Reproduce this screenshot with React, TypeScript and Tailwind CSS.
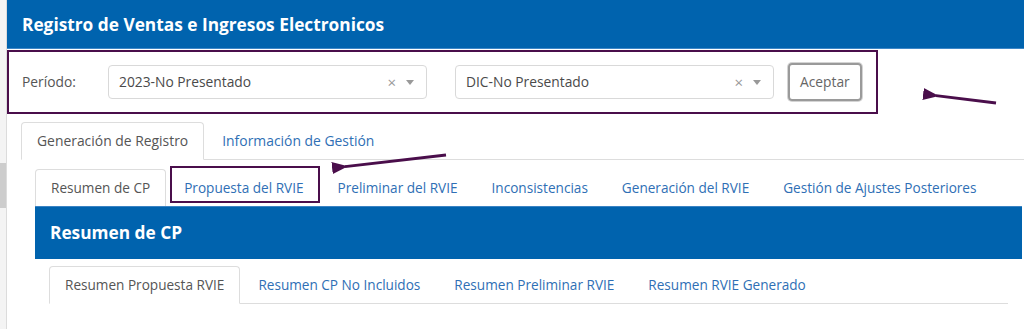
import clsx from 'clsx';

const tabsTop = ['Generación de Registro', 'Información de Gestión'];
const tabsMid = [
  'Resumen de CP',
  'Propuesta del RVIE',
  'Preliminar del RVIE',
  'Inconsistencias',
  'Generación del RVIE',
  'Gestión de Ajustes Posteriores',
];
const tabsLow = ['Resumen Propuesta RVIE', 'Resumen CP No Incluidos', 'Resumen Preliminar RVIE', 'Resumen RVIE Generado'];

function Tab({ label, active, boxed, size = 'text-[13.6px]' }: { label: string; active?: boolean; boxed?: boolean; size?: string }) {
  return (
    <div
      className={clsx(
        'relative mr-[2px] -mb-px flex h-[38px] items-center px-[15px] rounded-t-[4px] border whitespace-nowrap',
        size,
        active ? 'bg-white border-[#ddd] border-b-white text-[#555]' : 'border-transparent text-[#2f6fb5]'
      )}
    >
      {label}
      {boxed && <span className="absolute left-[1px] -right-[1px] -top-[4px] bottom-[3px] border-2 border-[#4a0e4b]" />}
    </div>
  );
}

function Select({ value }: { value: string }) {
  return (
    <div className="flex h-[34px] w-[319px] items-center rounded-[4px] border border-[#d9d9d9] bg-white pl-[10px] pr-[12px] text-[13.8px] text-[#4a4a4a]">
      <span className="flex-1">{value}</span>
      <span className="text-[15px] leading-none text-[#999]">×</span>
      <span className="ml-[10px] h-0 w-0 border-x-[4px] border-t-[5px] border-x-transparent border-t-[#999]" />
    </div>
  );
}

export default function App() {
  return (
    <div className="relative flex h-[329px] w-[1024px] overflow-hidden bg-white font-['Open_Sans',sans-serif]">
      {/* left gutter */}
      <div className="w-[7px] shrink-0 border-r border-[#dcdcdc] bg-[#f4f4f4] pt-[163px]">
        <div className="h-[45px] bg-[#cdcdcd]" />
      </div>

      <div className="flex-1">
        <div className="flex h-[49px] items-center border-b border-[#3d87c8] bg-[#0063ae] pl-[15px] pt-[2px] text-[17.3px] font-bold text-white">
          Registro de Ventas e Ingresos Electronicos
        </div>

        <div className="mt-[1px] flex h-[64px] w-[871px] items-center border-2 border-[#4a0e4b] pl-[13px]">
          <span className="w-[86px] text-[13.8px] text-[#555]">Período:</span>
          <Select value="2023-No Presentado" />
          <div className="w-[28px]" />
          <Select value="DIC-No Presentado" />
          <button className="ml-[14px] h-[38px] rounded-[4px] border-2 border-[#9a9a9a] px-[10px] text-[13.8px] text-[#666] shadow-[0_0_0_1px_#d4d4d4]">
            Aceptar
          </button>
        </div>

        <div className="ml-[14px] mt-[8px]">
          <div className="flex border-b border-[#ddd]">
            {tabsTop.map((t, i) => (
              <Tab key={t} label={t} active={i === 0} size="text-[13.9px]" />
            ))}
          </div>

          <div className="pl-[14px] pr-[2px] pt-[9px]">
            <div className="flex">
              {tabsMid.map((t, i) => (
                <Tab key={t} label={t} active={i === 0} boxed={i === 1} />
              ))}
            </div>

            <div className="relative flex h-[53px] items-center border-t border-[#3a83c3] bg-[#0063ae] pl-[15px] text-[17.3px] font-bold text-white">
              Resumen de CP
            </div>

            <div className="px-[14px] pt-[7px]">
              <div className="flex border-b border-[#ddd]">
                {tabsLow.map((t, i) => (
                  <Tab key={t} label={t} active={i === 0} />
                ))}
              </div>
            </div>
          </div>
        </div>
      </div>

      {/* annotation arrows */}
      <svg className="pointer-events-none absolute left-0 top-0" width="1024" height="329">
        <defs>
          <marker id="head" markerWidth="16" markerHeight="12" refX="3" refY="6" orient="auto" markerUnits="userSpaceOnUse">
            <path d="M16 0 L0 6 L16 12 Z" fill="#4a0e4b" />
          </marker>
        </defs>
        <line x1="996" y1="103" x2="936" y2="95.6" stroke="#4a0e4b" strokeWidth="2.8" markerEnd="url(#head)" />
        <line x1="446" y1="155" x2="345" y2="166.6" stroke="#4a0e4b" strokeWidth="2.8" markerEnd="url(#head)" />
      </svg>
    </div>
  );
}
